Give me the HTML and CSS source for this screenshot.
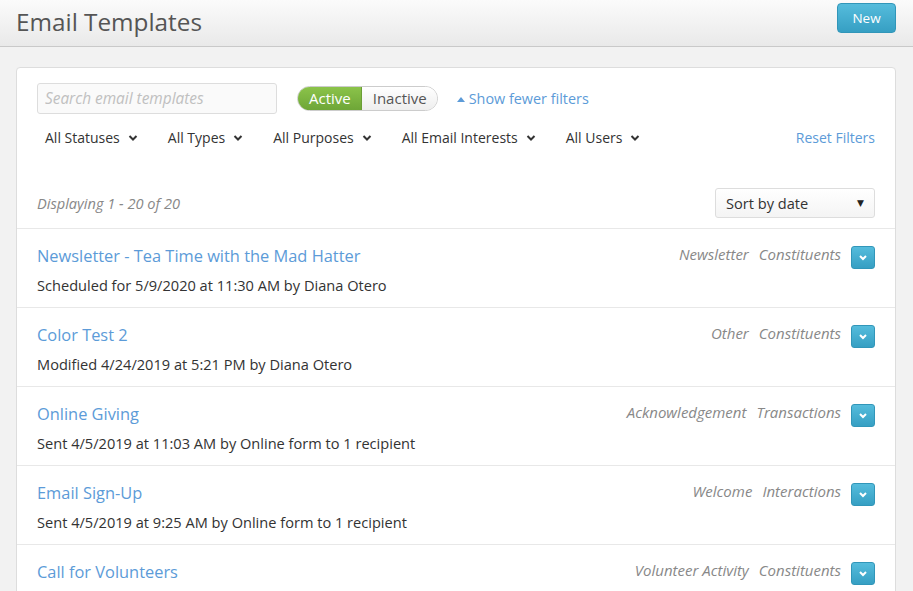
FILE: index.html
```html
<!DOCTYPE html>
<html lang="en">
<head>
	<meta charset="UTF-8" />
	<title>Email Templates</title>
	<link rel="stylesheet" href="styles.css">
</head>
<body>
	<div class="pageHead">
		<h1>Email Templates</h1>
		<a class="btnNew" href="###">New</a>
	</div>
	<div class="card">
		<div class="filters">
			<div class="filterTop">
				<input class="search" type="text" placeholder="Search email templates" />
				<div class="toggle">
					<a class="on" href="###">Active</a>
					<a href="###">Inactive</a>
				</div>
				<a class="fewer" href="###"><span class="tri"></span>Show fewer filters</a>
			</div>
			<div class="filterRow">
				<a class="drop" href="###">All Statuses<svg viewBox="0 0 10 8"><path d="M1.5 2 5 5.5 8.5 2"/></svg></a>
				<a class="drop" href="###">All Types<svg viewBox="0 0 10 8"><path d="M1.5 2 5 5.5 8.5 2"/></svg></a>
				<a class="drop" href="###">All Purposes<svg viewBox="0 0 10 8"><path d="M1.5 2 5 5.5 8.5 2"/></svg></a>
				<a class="drop" href="###">All Email Interests<svg viewBox="0 0 10 8"><path d="M1.5 2 5 5.5 8.5 2"/></svg></a>
				<a class="drop" href="###">All Users<svg viewBox="0 0 10 8"><path d="M1.5 2 5 5.5 8.5 2"/></svg></a>
				<a class="reset" href="###">Reset Filters</a>
			</div>
		</div>
		<div class="listHead">
			<span class="count">Displaying 1 - 20 of 20</span>
			<div class="sort">Sort by date<span class="caret">&#9660;</span></div>
		</div>
		<ul class="list">
			<li>
				<div class="info">
					<a class="name" href="###">Newsletter - Tea Time with the Mad Hatter</a>
					<p class="meta">Scheduled for 5/9/2020 at 11:30 AM by Diana Otero</p>
				</div>
				<div class="tags"><span>Newsletter</span><span>Constituents</span></div>
				<a class="more" href="###"><svg viewBox="0 0 10 8"><path d="M2 2 5 5 8 2"/></svg></a>
			</li>
			<li>
				<div class="info">
					<a class="name" href="###">Color Test 2</a>
					<p class="meta">Modified 4/24/2019 at 5:21 PM by Diana Otero</p>
				</div>
				<div class="tags"><span>Other</span><span>Constituents</span></div>
				<a class="more" href="###"><svg viewBox="0 0 10 8"><path d="M2 2 5 5 8 2"/></svg></a>
			</li>
			<li>
				<div class="info">
					<a class="name" href="###">Online Giving</a>
					<p class="meta">Sent 4/5/2019 at 11:03 AM by Online form to 1 recipient</p>
				</div>
				<div class="tags"><span>Acknowledgement</span><span>Transactions</span></div>
				<a class="more" href="###"><svg viewBox="0 0 10 8"><path d="M2 2 5 5 8 2"/></svg></a>
			</li>
			<li>
				<div class="info">
					<a class="name" href="###">Email Sign-Up</a>
					<p class="meta">Sent 4/5/2019 at 9:25 AM by Online form to 1 recipient</p>
				</div>
				<div class="tags"><span>Welcome</span><span>Interactions</span></div>
				<a class="more" href="###"><svg viewBox="0 0 10 8"><path d="M2 2 5 5 8 2"/></svg></a>
			</li>
			<li>
				<div class="info">
					<a class="name" href="###">Call for Volunteers</a>
					<p class="meta">Sent 4/5/2019 at 9:02 AM by Online form to 1 recipient</p>
				</div>
				<div class="tags"><span>Volunteer Activity</span><span>Constituents</span></div>
				<a class="more" href="###"><svg viewBox="0 0 10 8"><path d="M2 2 5 5 8 2"/></svg></a>
			</li>
		</ul>
	</div>
</body>
</html>
```

FILE: styles.css
```css
*{
	margin: 0;padding: 0;
	box-sizing: border-box;
}
body{
	background: #f2f2f2;
	font-family: "Open Sans", "DejaVu Sans", sans-serif;
	color: #333;
	overflow: hidden;
}
a{
	text-decoration: none;
}

.pageHead{
	height: 47px;
	display: flex;
	align-items: center;
	justify-content: space-between;
	padding: 0 17px 0 16px;
	background: linear-gradient(#fbfbfb, #e9e9e9);
	border-bottom: 1px solid #c9c9c9;
}
.pageHead h1{
	font-size: 24.3px;
	font-weight: normal;
	color: #555;
	margin-top: -4px;
}
.btnNew{
	width: 59px;height: 30px;
	line-height: 28px;
	text-align: center;
	font-size: 13.5px;
	color: #fff;
	border-radius: 4px;
	background: linear-gradient(#55bcdc, #369fc3);
	border: 1px solid #3196b9;
	margin-top: -11px;
}

.card{
	margin: 20px 17px 0 16px;
	background: #fff;
	border: 1px solid #ddd;
	border-radius: 4px;
}
.filters{
	padding: 15px 20px 0 20px;
}
.filterTop{
	display: flex;
	align-items: center;
}
.search{
	width: 240px;height: 31px;
	border: 1px solid #ddd;
	border-radius: 3px;
	background: #fafafa;
	padding: 0 7px;
	font: italic 15.4px "Open Sans", "DejaVu Sans", sans-serif;
	outline: none;
}
.search::placeholder{
	color: #c0c0c0;
}
.toggle{
	display: flex;
	margin-left: 20px;
	height: 25px;
	border: 1px solid #ccc;
	border-radius: 13px;
	overflow: hidden;
}
.toggle a{
	padding: 0 10px 0 11px;
	line-height: 23px;
	font-size: 15px;
	color: #555;
	background: linear-gradient(#fff, #eee);
}
.toggle a.on{
	padding: 0 10px 0 11px;
	color: #fff;
	background: linear-gradient(#8bc34a, #6ea637);
	border-right: 1px solid #6b9e36;
}
.fewer{
	margin-left: 19px;
	font-size: 14.4px;
	color: #5c9bd8;
}
.tri{
	display: inline-block;
	border: 4px solid transparent;
	border-bottom: 5px solid #5c9bd8;
	border-top: 0;
	margin: 0 4px 2px 0;
	vertical-align: middle;
}
.filterRow{
	display: flex;
	align-items: center;
	height: 47px;
	padding: 0 0 0 8px;
}
.drop{
	font-size: 14px;
	color: #333;
	margin-right: 30px;
	display: flex;
	align-items: center;
}
.drop svg{
	width: 10px;height: 8px;
	margin-left: 8px;
	fill: none;
	stroke: #333;
	stroke-width: 2;
}
.reset{
	margin-left: auto;
	font-size: 14px;
	color: #5c9bd8;
}

.listHead{
	display: flex;
	align-items: center;
	justify-content: space-between;
	padding: 27px 20px 10px 20px;
	border-bottom: 1px solid #e8e8e8;
}
.count{
	font-style: italic;
	font-size: 14.6px;
	color: #888;
}
.sort{
	width: 160px;height: 30px;
	border: 1px solid #ddd;
	border-radius: 3px;
	background: linear-gradient(#fff, #f4f4f4);
	padding: 0 10px;
	font-size: 14.6px;
	line-height: 28px;
	color: #333;
	display: flex;
	justify-content: space-between;
}
.caret{
	font-size: 9px;
	color: #222;
}

.list li{
	list-style-type: none;
	height: 79px;
	display: flex;
	align-items: flex-start;
	padding: 15px 20px 0 20px;
	border-bottom: 1px solid #e8e8e8;
}
.info{
	flex: 1;
}
.name{
	display: block;
	font-size: 16.4px;
	color: #5c9bd8;
	line-height: 24px;
}
.meta{
	font-size: 14.6px;
	line-height: 20px;
	margin-top: 7px;
	color: #333;
}
.tags{
	margin-top: 0;
	font-style: italic;
	font-size: 15px;
	color: #888;
}
.tags span{
	margin-left: 10px;
}
.more{
	width: 24px;height: 23px;
	margin-left: 10px;
	margin-top: 2px;
	border-radius: 3px;
	background: linear-gradient(#55bcdc, #369fc3);
	border: 1px solid #3196b9;
	display: flex;
	align-items: center;
	justify-content: center;
}
.more svg{
	width: 10px;height: 8px;
	fill: none;
	stroke: #fff;
	stroke-width: 2;
}
```
